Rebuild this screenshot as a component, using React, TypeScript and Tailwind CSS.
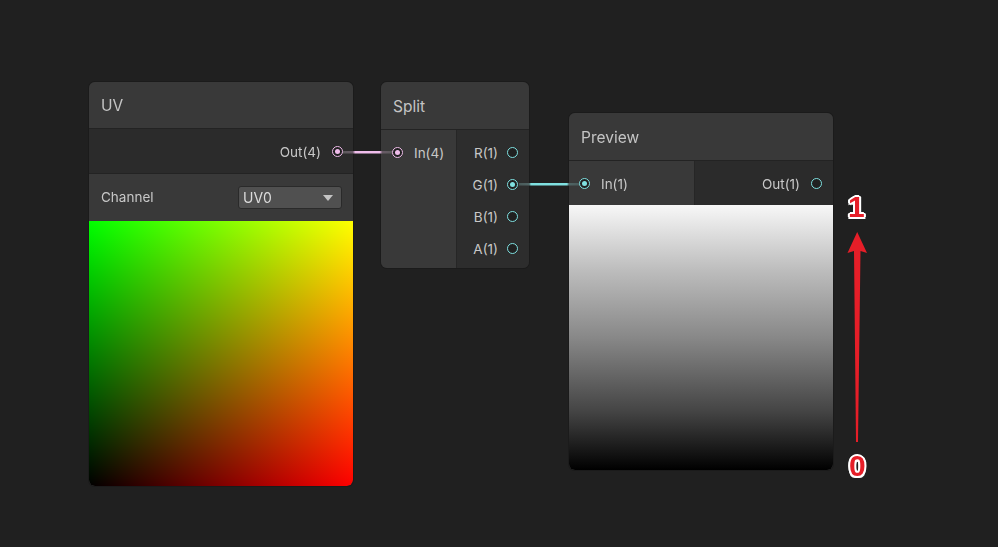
import React from "react";

const PINK = "#f0bdeb";
const CYAN = "#7fe0e0";

function Port({ color, filled }: { color: string; filled?: boolean }) {
  return (
    <span
      className="flex h-[11px] w-[11px] shrink-0 items-center justify-center rounded-full border-[1.5px] bg-[#202020]"
      style={{ borderColor: color }}
    >
      {filled && <span className="h-[5px] w-[5px] rounded-full" style={{ background: color }} />}
    </span>
  );
}

function Header({ title, h }: { title: string; h: string }) {
  return (
    <div className={`${h} flex items-center bg-[#393939] px-3 pt-[2px] text-[15.5px] text-[#c4c4c4] border-b border-[#232323]`}>
      {title}
    </div>
  );
}

function UVNode() {
  return (
    <div className="absolute left-[89px] top-[82px] w-[264px] overflow-hidden rounded-[6px] bg-[#2d2d2d] shadow-[0_0_0_1px_#1b1b1b]">
      <Header title="UV" h="h-[47px]" />
      <div className="flex h-[45px] items-center justify-end gap-[11px] bg-[#2b2b2b] pr-[10px] text-[13.5px] text-[#c8c8c8] border-b border-[#232323]">
        <span className="pt-[2px]">Out(4)</span>
        <Port color={PINK} filled />
      </div>
      <div className="flex h-[47px] items-center justify-between bg-[#393939] pl-3 pr-[11px] text-[13.5px] text-[#c8c8c8]">
        <span>Channel</span>
        <div className="flex h-[23px] w-[104px] items-center justify-between rounded-[3px] border border-[#2a2a2a] bg-[#505050] pl-1 pr-2 text-[14px] text-[#dcdcdc]">
          <span>UV0</span>
          <span className="h-0 w-0 border-x-[5px] border-t-[6px] border-x-transparent border-t-[#c4c4c4]" />
        </div>
      </div>
      <div className="relative h-[265px] overflow-hidden rounded-b-[6px] bg-[linear-gradient(to_top,#000,#00ff00)]">
        <div className="absolute inset-0 mix-blend-screen bg-[linear-gradient(to_right,#000,#ff0000)]" />
      </div>
    </div>
  );
}

function SplitRow({ label, filled }: { label: string; filled?: boolean }) {
  return (
    <div className="flex h-[32px] items-center justify-end gap-[9px] pr-[11px]">
      <span className="pt-[2px]">{label}</span>
      <Port color={CYAN} filled={filled} />
    </div>
  );
}

function SplitNode() {
  return (
    <div className="absolute left-[381px] top-[82px] w-[148px] overflow-hidden rounded-[6px] bg-[#2d2d2d] shadow-[0_0_0_1px_#1b1b1b]">
      <Header title="Split" h="h-[48px]" />
      <div className="flex h-[138px] text-[13.5px] text-[#c8c8c8]">
        <div className="w-[76px] border-r border-[#262626] bg-[#393939] pt-[6px]">
          <div className="flex h-[32px] items-center gap-[11px] pl-[11px]">
            <Port color={PINK} filled />
            <span className="pt-[2px]">In(4)</span>
          </div>
        </div>
        <div className="flex-1 bg-[#2d2d2d] pt-[6px]">
          <SplitRow label="R(1)" />
          <SplitRow label="G(1)" filled />
          <SplitRow label="B(1)" />
          <SplitRow label="A(1)" />
        </div>
      </div>
    </div>
  );
}

function PreviewNode() {
  return (
    <div className="absolute left-[569px] top-[113px] w-[264px] overflow-hidden rounded-[6px] bg-[#2d2d2d] shadow-[0_0_0_1px_#1b1b1b]">
      <Header title="Preview" h="h-[48px]" />
      <div className="flex h-[44px] text-[13.5px] text-[#c8c8c8]">
        <div className="flex w-[126px] items-center gap-[11px] border-r border-[#262626] bg-[#393939] pl-[10px]">
          <Port color={CYAN} filled />
          <span className="pt-[2px]">In(1)</span>
        </div>
        <div className="flex flex-1 items-center justify-end gap-[11px] bg-[#2b2b2b] pr-[11px]">
          <span className="pt-[2px]">Out(1)</span>
          <Port color={CYAN} />
        </div>
      </div>
      <div className="h-[265px] rounded-b-[6px] bg-[linear-gradient(to_bottom,#f7f7f7_0%,#bcbcbc_25%,#888_50%,#444_78%,#000_100%)]" />
    </div>
  );
}

function Edges() {
  return (
    <svg className="pointer-events-none absolute left-0 top-0" width={998} height={547}>
      <defs>
        <linearGradient id="pinkEdge" x1="343" x2="392" y1="0" y2="0" gradientUnits="userSpaceOnUse">
          <stop offset="0" stopColor="#5a5a5a" />
          <stop offset="0.2" stopColor="#6a5a68" />
          <stop offset="0.25" stopColor={PINK} />
          <stop offset="0.75" stopColor={PINK} />
          <stop offset="0.8" stopColor="#6a5a68" />
          <stop offset="1" stopColor="#5a5a5a" />
        </linearGradient>
        <linearGradient id="cyanEdge" x1="519" x2="579" y1="0" y2="0" gradientUnits="userSpaceOnUse">
          <stop offset="0" stopColor="#4a5a5a" />
          <stop offset="0.17" stopColor="#4f6565" />
          <stop offset="0.2" stopColor={CYAN} />
          <stop offset="0.8" stopColor={CYAN} />
          <stop offset="0.83" stopColor="#4f6565" />
          <stop offset="1" stopColor="#4a5a5a" />
        </linearGradient>
      </defs>
      <rect x={343} y={151} width={49} height={2.5} fill="url(#pinkEdge)" />
      <rect x={519} y={183} width={60} height={2.5} fill="url(#cyanEdge)" />
    </svg>
  );
}

function Arrow() {
  return (
    <svg className="pointer-events-none absolute left-0 top-0" width={998} height={547}>
      <polygon points="856,442 858,442 860.5,251 867,253 857.2,232 847.5,253 854,251" fill="#e61e28" />
    </svg>
  );
}

const outline =
  "[text-shadow:2px_0_0_#fff,-2px_0_0_#fff,0_2px_0_#fff,0_-2px_0_#fff,1.5px_1.5px_0_#fff,-1.5px_-1.5px_0_#fff,1.5px_-1.5px_0_#fff,-1.5px_1.5px_0_#fff]";

export default function App() {
  return (
    <div className="relative h-[547px] w-[998px] overflow-hidden bg-[#202020] font-['Inter','Noto_Sans',sans-serif]">
      <UVNode />
      <SplitNode />
      <PreviewNode />
      <Edges />
      <Arrow />
      <span
        className={`absolute left-[848px] top-[190px] font-['Liberation_Sans',sans-serif] text-[30px] font-bold leading-[34px] text-[#e61e28] ${outline}`}
      >
        1
      </span>
      <span
        className={`absolute left-[849px] top-[449px] font-['Liberation_Sans',sans-serif] text-[30px] font-bold leading-[34px] text-[#e61e28] ${outline}`}
      >
        0
      </span>
    </div>
  );
}
